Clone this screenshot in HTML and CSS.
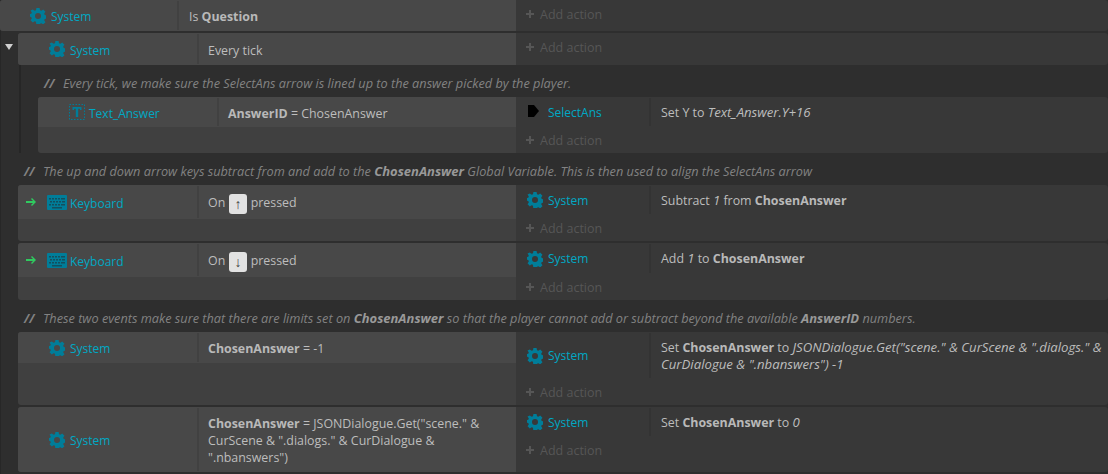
FILE: index.html
```html
<!DOCTYPE html>
<html>
<head>
<meta charset="utf-8">
<title>Event sheet</title>
<link rel="stylesheet" href="styles.css">
</head>
<body>
<svg class="defs" width="0" height="0">
  <defs>
    <symbol id="gear" viewBox="0 0 24 24"><path fill-rule="evenodd" d="M9.600 0h4.800l.6 3.300 2 .8 2.800-1.900 3.400 3.400-1.900 2.800.8 2 3 .6v4.800l-3 .6-.8 2 1.900 2.800-3.400 3.400-2.800-1.900-2 .8-.6 3.300H9.600L9 20.700l-2-.8-2.800 1.900-3.400-3.400 1.900-2.800-.8-2-3-.6V9.200l3-.6.8-2-1.900-2.800L4.200 2.400 7 4.100l2-.8.600-3.300zM12 7.500a4.500 4.500 0 1 0 0 9 4.500 4.500 0 0 0 0-9z"/></symbol>
    <symbol id="keyboard" viewBox="0 0 20 15"><rect width="20" height="15" rx="1"/><path fill="#134f5e" d="M2 3v1.500h2V3zM5 3v1.500h2V3zM8 3v1.500h2V3zM11 3v1.500h2V3zM14 3v1.500h4V3zM3 6v1.500h2V6zM6 6v1.500h2V6zM9 6v1.500h2V6zM12 6v1.500h2V6zM15 6v1.500h3V6zM2 9v1.500h2V9zM5 9v1.500h2V9zM8 9v1.500h2V9zM11 9v1.500h2V9zM14 9v1.500h4V9zM5 12v1.500h10V12z"/></symbol>
    <symbol id="text-obj" viewBox="0 0 16 16"><rect x=".5" y=".5" width="15" height="15" fill="none" stroke="currentColor" stroke-dasharray="1.500 1.500"/><path d="M3.500 3h9v3h-1.500V4.800H9.200v8.200H6.800V4.800H5V6H3.500z"/></symbol>
    <symbol id="sprite" viewBox="0 0 11 12"><path fill="#000" d="M0 0h6l5 6-5 6H0z"/></symbol>
    <symbol id="green" viewBox="0 0 10 8"><path fill="#2fcb5f" d="M6 0l4 4-4 4-1-1 2-2H0V3h7L5 1z"/></symbol>
  </defs>
</svg>

<div class="sheet">
  <section class="event root">
    <div class="conds">
      <div class="cond h31"><div class="obj root-obj"><svg class="ico gear"><use href="#gear"/></svg><span class="name">System</span></div><div class="param root-param">Is <b>Question</b></div></div>
    </div>
    <div class="acts"><div class="add">Add action</div></div>
  </section>

  <div class="group">
    <div class="toggle"></div>
    <section class="event top mt2">
      <div class="conds">
        <div class="cond h32"><div class="obj"><svg class="ico gear"><use href="#gear"/></svg><span class="name">System</span></div><div class="param">Every tick</div></div>
      </div>
      <div class="acts"><div class="add">Add action</div></div>
    </section>
    <div class="children">
      <div class="comment sub h32"><i class="slashes">//</i><em>Every tick, we make sure the SelectAns arrow is lined up to the answer picked by the player.</em></div>
      <section class="event subevent">
        <div class="conds">
          <div class="cond h30"><div class="obj sub-obj"><svg class="ico text"><use href="#text-obj"/></svg><span class="name">Text_Answer</span></div><div class="param"><b>AnswerID</b> = ChosenAnswer</div></div>
        </div>
        <div class="acts">
          <div class="act h30"><div class="act-obj"><svg class="ico spr"><use href="#sprite"/></svg><span class="name">SelectAns</span></div><div class="act-text">Set Y to <em>Text_Answer.Y+16</em></div></div>
          <div class="add flush">Add action</div>
        </div>
      </section>
    </div>
  </div>

  <div class="comment h30 mt2"><i class="slashes">//</i><em>The up and down arrow keys subtract from and add to the <b>ChosenAnswer</b> Global Variable. This is then used to align the SelectAns arrow</em></div>

  <section class="event top h56">
    <div class="conds">
      <div class="cond h34"><svg class="trigger"><use href="#green"/></svg><div class="obj"><svg class="ico kb"><use href="#keyboard"/></svg><span class="name">Keyboard</span></div><div class="param">On <kbd>↑</kbd> pressed</div></div>
    </div>
    <div class="acts">
      <div class="act h30"><div class="act-obj"><svg class="ico gear"><use href="#gear"/></svg><span class="name">System</span></div><div class="act-text">Subtract <em>1</em> from <b>ChosenAnswer</b></div></div>
      <div class="add flush">Add action</div>
    </div>
  </section>

  <section class="event top h57 mt2">
    <div class="conds">
      <div class="cond h34"><svg class="trigger"><use href="#green"/></svg><div class="obj"><svg class="ico kb"><use href="#keyboard"/></svg><span class="name">Keyboard</span></div><div class="param">On <kbd>↓</kbd> pressed</div></div>
    </div>
    <div class="acts">
      <div class="act h31"><div class="act-obj"><svg class="ico gear"><use href="#gear"/></svg><span class="name">System</span></div><div class="act-text">Add <em>1</em> to <b>ChosenAnswer</b></div></div>
      <div class="add flush">Add action</div>
    </div>
  </section>

  <div class="comment h32 low"><i class="slashes">//</i><em>These two events make sure that there are limits set on <b>ChosenAnswer</b> so that the player cannot add or subtract beyond the available <b>AnswerID</b> numbers.</em></div>

  <section class="event top h73">
    <div class="conds">
      <div class="cond h31"><div class="obj"><svg class="ico gear"><use href="#gear"/></svg><span class="name">System</span></div><div class="param"><b>ChosenAnswer</b> = -1</div></div>
    </div>
    <div class="acts">
      <div class="act h47"><div class="act-obj"><svg class="ico gear"><use href="#gear"/></svg><span class="name">System</span></div><div class="act-text"><span>Set <b>ChosenAnswer</b> to <em>JSONDialogue.Get("scene." &amp; CurScene &amp; ".dialogs." &amp; CurDialogue &amp; ".nbanswers") -1</em></span></div></div>
      <div class="add flush">Add action</div>
    </div>
  </section>

  <section class="event top h65 mt2">
    <div class="conds">
      <div class="cond h65"><div class="obj"><svg class="ico gear"><use href="#gear"/></svg><span class="name">System</span></div><div class="param multi"><span><b>ChosenAnswer</b> = JSONDialogue.Get("scene." &amp; CurScene &amp; ".dialogs." &amp; CurDialogue &amp; ".nbanswers")</span></div></div>
    </div>
    <div class="acts">
      <div class="act h30"><div class="act-obj"><svg class="ico gear"><use href="#gear"/></svg><span class="name">System</span></div><div class="act-text">Set <b>ChosenAnswer</b> to <em>0</em></div></div>
      <div class="add flush">Add action</div>
    </div>
  </section>
</div>
</body>
</html>
```

FILE: styles.css
```css
* { box-sizing: border-box; }
html, body { margin: 0; padding: 0; }
body {
  width: 1108px;
  height: 474px;
  overflow: hidden;
  background: #2e2e2e;
  color: #bdbdbd;
  font: 12.4px/17px "Open Sans", "Noto Sans", sans-serif;
}
.defs { position: absolute; }
.sheet { display: flex; flex-direction: column; border-left: 1px solid #272727; height: 474px; }

b { font-weight: 700; color: #b9b9b9; }
em { font-style: italic; font-size: 13.2px; }

.event { display: flex; flex: none; border-radius: 3px; overflow: hidden; }
.event.root { margin-left: -1px; }
.event.top { margin-left: 17px; }
.mt2 { margin-top: 2px; }
.h56 { height: 56px; }
.h57 { height: 57px; }
.h65 { height: 65px; }
.h73 { height: 73px; }

.conds { flex: none; width: 498px; background: #404040; }
.root .conds { width: 516px; }
.subevent .conds { width: 478px; }
.acts { flex: 1; background: #383838; }

.cond { display: flex; position: relative; background: #484848; }
.h30 { height: 30px; }
.h31 { height: 31px; }
.h32 { height: 32px; }
.h34 { height: 34px; }
.h47 { height: 47px; }

.obj {
  flex: none;
  width: 181px;
  display: flex;
  align-items: center;
  padding-left: 31px;
  border-right: 2px solid #414141;
  margin: 1px 0;
  font-size: 12px;
}
.root-obj { width: 179px; padding-left: 30px; }
.name { color: #00a8c4; padding-top: 2px; }
.ico { flex: none; fill: #007d99; color: #007d99; }
.gear { width: 16px; height: 16px; margin-right: 5px; }
.kb { width: 20px; height: 15px; margin: 0 3px 0 -2px; }
.text { width: 16px; height: 16px; margin-right: 4px; }
.spr { width: 11px; height: 12px; margin: 0 9px 2px 1px; }

.param { flex: 1; padding: 8px 8px 0 9px; min-width: 0; }
.root-param { padding-left: 10px; }
.h32 > .param { padding-top: 9px; }
.h34 > .param { padding-top: 9px; word-spacing: -0.5px; }
.multi { align-self: center; padding: 2px 8px 0 9px; }

.trigger { position: absolute; left: 8px; top: 13px; width: 10px; height: 8px; }

kbd {
  display: inline-block;
  width: 18px;
  height: 20px;
  margin: 0 1px;
  border-radius: 3px;
  background: #e2e2e2;
  color: #444;
  font: 14px/20px "Liberation Sans", sans-serif;
  text-align: center;
  vertical-align: middle;
}

.act { display: flex; }
.act-obj {
  flex: none;
  width: 135px;
  display: flex;
  align-items: center;
  padding-left: 11px;
  border-right: 2px solid #333;
  margin: 1px 0;
  font-size: 12px;
}
.act-obj .name { padding-top: 0; }
.act-text { flex: 1; min-width: 0; padding: 7px 0 0 10px; }

.add {
  height: 26px;
  margin-top: 1px;
  padding-left: 24px;
  color: #565656;
  line-height: 28px;
  position: relative;
  font-size: 12.5px;
}
.add.flush { margin-top: 0; }
.add::before, .add::after { content: ""; position: absolute; background: #565656; }
.add::before { left: 10px; top: 12px; width: 8px; height: 2px; }
.add::after { left: 13px; top: 9px; width: 2px; height: 8px; }

.group { position: relative; flex: none; }
.toggle {
  position: absolute;
  left: 4px;
  top: 13px;
  border-style: solid;
  border-width: 6px 4px 0;
  border-color: #cfcfcf transparent transparent;
}
.children { margin-left: 18px; border-left: 2px solid #262626; }
.subevent { margin-left: 17px; }

.comment {
  flex: none;
  display: flex;
  align-items: center;
  padding: 3px 0 0 23px;
  color: #828282;
}
.comment em { font-size: 12.72px; }
.comment.sub { padding: 5px 0 0 23px; }
.comment.low { padding-top: 5px; }
.slashes { width: 19px; font-weight: 700; flex: none; }
.comment b { color: #999; font-size: 13px; }
```
